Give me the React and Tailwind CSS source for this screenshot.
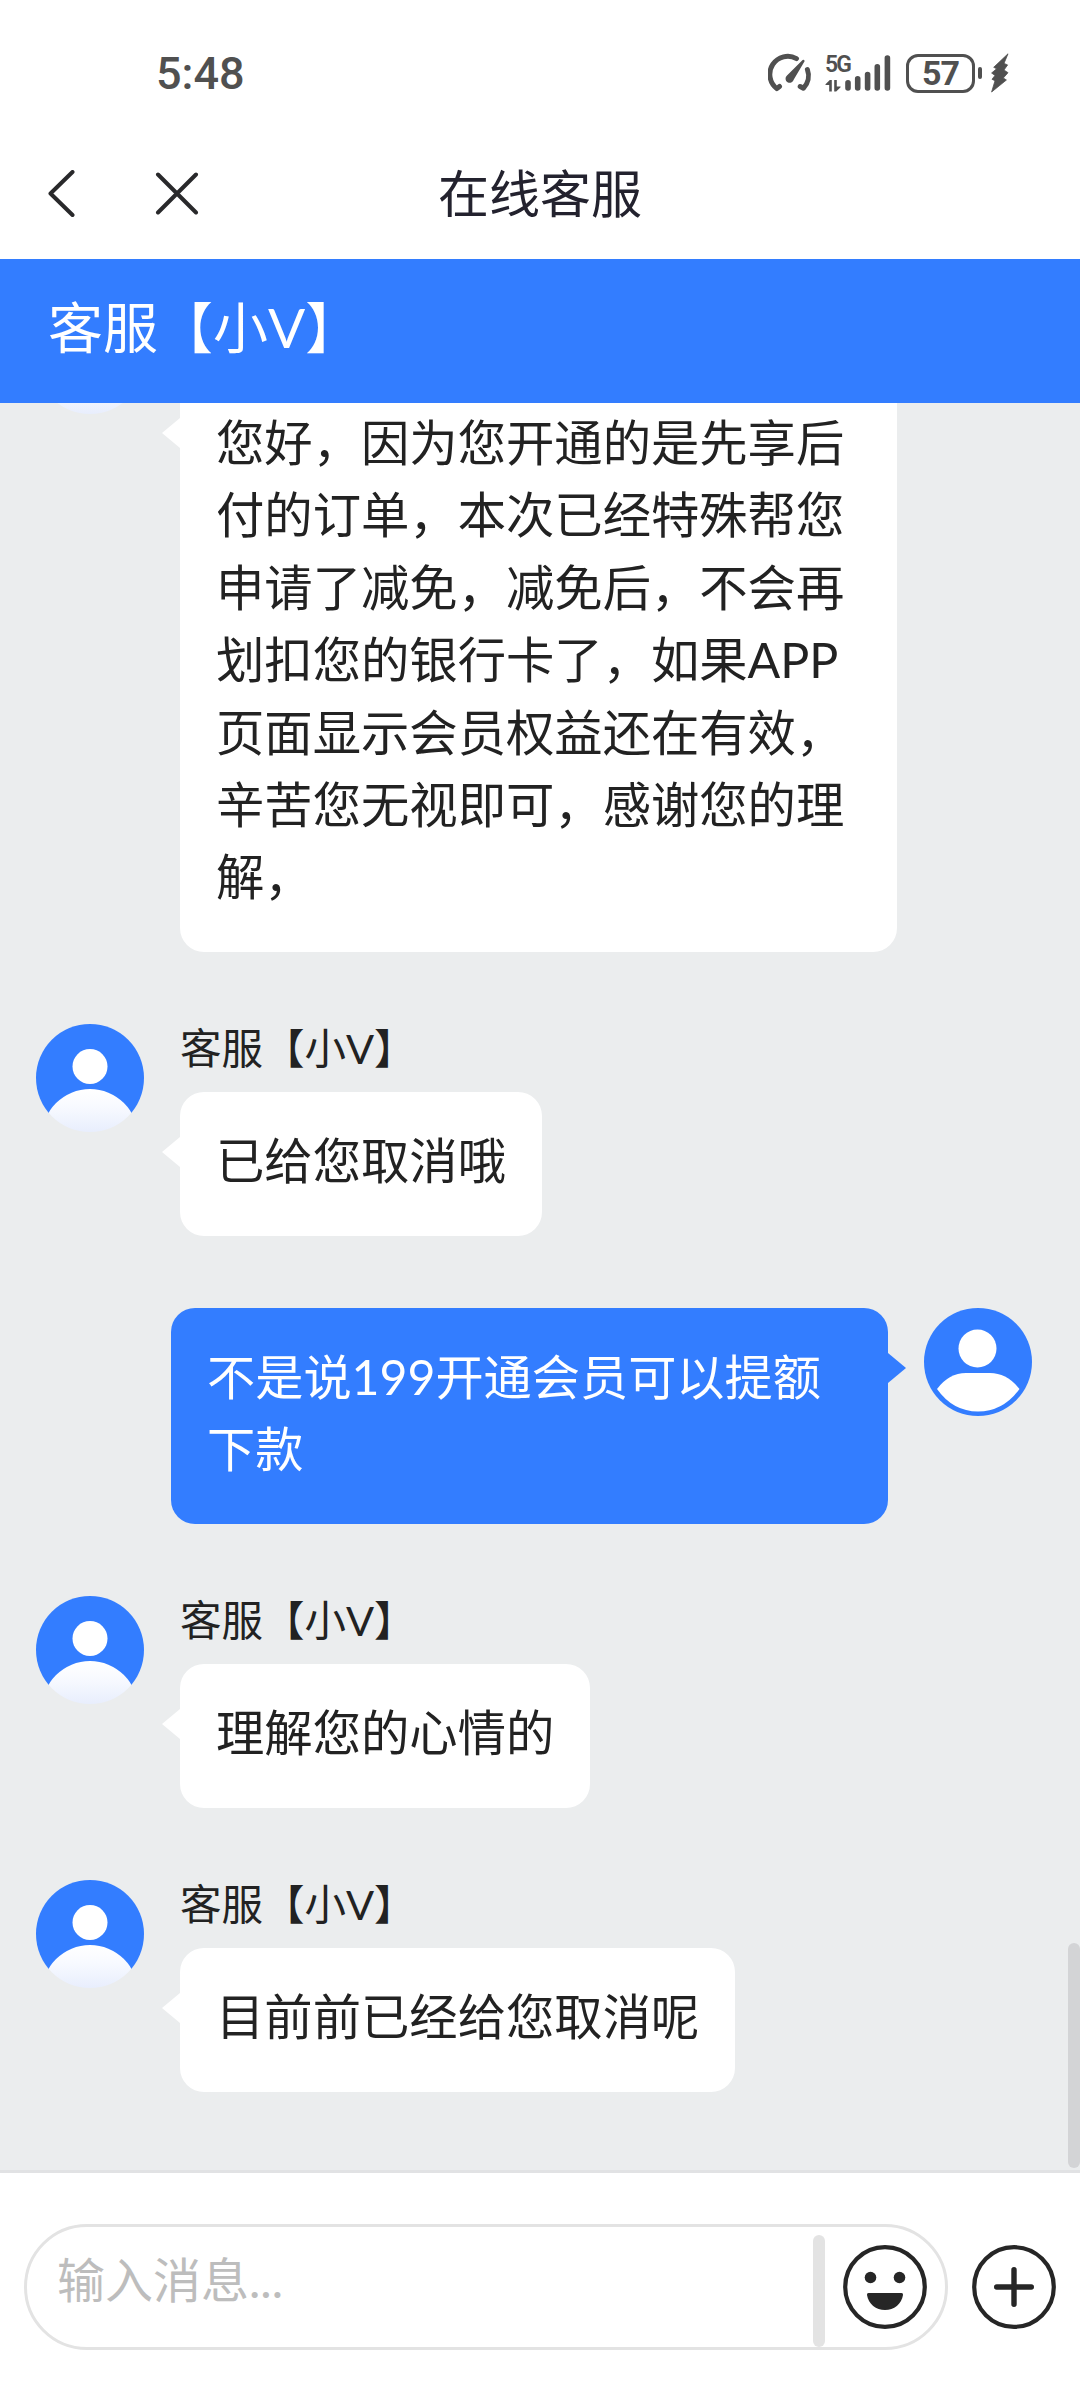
import React from "react";

const messages = [
  {
    from: "agent",
    text: "您好，因为您开通的是先享后付的订单，本次已经特殊帮您申请了减免，减免后，不会再划扣您的银行卡了，如果APP页面显示会员权益还在有效，辛苦您无视即可，感谢您的理解，",
  },
  { from: "agent", name: "客服【小V】", text: "已给您取消哦" },
  { from: "user", text: "不是说199开通会员可以提额下款" },
  { from: "agent", name: "客服【小V】", text: "理解您的心情的" },
  { from: "agent", name: "客服【小V】", text: "目前前已经给您取消呢" },
];

const StatusBar = () => (
  <div className="h-[128px] shrink-0 flex items-start pt-[52px] pl-[156px] pr-[71px] text-[#505050]">
    <span className="font-['Roboto'] font-medium text-[45px] leading-[44px] mr-auto">
      5:48
    </span>

    {/* Speed gauge */}
    <svg className="w-[45px] h-[42px]" viewBox="768 52 45 42" fill="none">
      <g stroke="currentColor" strokeWidth="5" strokeLinecap="round" strokeLinejoin="round">
        <path d="M779.5 86.5L776.8 88.6A18 18 0 0 1 796.5 58.6" />
        <path d="M807.4 69.5A18 18 0 0 1 803.4 88.2L800.2 86.5" />
      </g>
      <path d="M804.6 61.2L793.8 79.6A4.2 4.2 0 1 1 787 75.4L802.6 60Q804.6 59 804.6 61.2Z" fill="currentColor" />
    </svg>

    {/* Network */}
    <div className="flex ml-3">
      <div className="w-[19px] h-[42px] flex flex-col">
        <span className="font-['Roboto'] font-semibold text-[23px] leading-[26px] whitespace-nowrap tracking-[-2px]">
          5G
        </span>
        <svg className="w-[16px] h-[12px] mt-[2px]" viewBox="0 0 16 12" fill="currentColor">
          <path d="M6.8 0V11.5H4.2V5H0.5V4.2L4.8 0Z" />
          <path d="M9.2 11.5V0H11.8V6.5H15.6V7.3L11.2 11.5Z" />
        </svg>
      </div>
      <svg className="w-[48px] h-[42px]" viewBox="844 52 48 42" stroke="currentColor" strokeWidth="5.6" strokeLinecap="round">
        <path d="M848 82.7V88M857.7 78.7V88M867.6 74.5V88M877.3 66.7V88M887.4 58V88" />
      </svg>
    </div>

    {/* Battery */}
    <div className="flex items-center ml-[14px] mt-px">
      <div className="w-[69px] h-[39px] rounded-[12px] border-[3px] border-[#505050] flex items-center justify-center">
        <span className="font-['Roboto'] font-bold text-[34px] leading-none tracking-[-1px]">57</span>
      </div>
      <div className="w-[4px] h-[12px] ml-[3px] rounded-full bg-[#505050]" />
      <svg className="w-[18px] h-[40px] ml-[9px]" viewBox="0 0 18 40" fill="currentColor" stroke="currentColor" strokeWidth="0.8" strokeLinejoin="round">
        <path d="M17 0.8L2.7 14.3L5.6 15.8L0.6 20L4 22.4L1 26.3L4 27.7L0.6 39L15.4 27L12.3 25L17 19.7L13 17L16.6 11.9L13 10.4Z" />
      </svg>
    </div>
  </div>
);

const NavBar = () => (
  <div className="h-[131px] shrink-0 grid grid-cols-[1fr_auto_1fr] items-center">
    <div className="flex items-center text-[#29292b]">
      <svg className="w-[28px] h-[48px] ml-[48px]" viewBox="0 0 28 48" fill="none" stroke="currentColor" strokeWidth="4" strokeLinecap="round" strokeLinejoin="round">
        <path d="M24.5 2L2.5 23.5L24.5 45" />
      </svg>
      <svg className="w-[44px] h-[44px] ml-[79px]" viewBox="0 0 44 44" fill="none" stroke="currentColor" strokeWidth="4" strokeLinecap="round">
        <path d="M3 2.5L41 40.5M41 2.5L3 40.5" />
      </svg>
    </div>
    <h1 className="text-[51px] leading-[72px] text-[#23222e]">在线客服</h1>
  </div>
);

const AgentAvatar = () => (
  <svg className="w-[108px] h-[108px] shrink-0" viewBox="0 0 108 108">
    <defs>
      <clipPath id="agentClip">
        <circle cx="54" cy="54" r="54" />
      </clipPath>
      <linearGradient id="agentBody" gradientUnits="userSpaceOnUse" x1="0" y1="65" x2="0" y2="108">
        <stop offset="0" stopColor="#ffffff" />
        <stop offset="0.4" stopColor="#f8faff" />
        <stop offset="1" stopColor="#e8eefd" />
      </linearGradient>
    </defs>
    <g clipPath="url(#agentClip)">
      <rect width="108" height="89" fill="#337dff" />
      <circle cx="54" cy="42.5" r="17.5" fill="#fff" />
      <circle cx="54" cy="113" r="48" fill="url(#agentBody)" />
    </g>
  </svg>
);

const UserAvatar = () => (
  <svg className="w-[108px] h-[108px] shrink-0" viewBox="0 0 108 108">
    <circle cx="54" cy="54" r="54" fill="#337dff" />
    <circle cx="53.5" cy="40.5" r="19" fill="#fff" />
    <path d="M13 81Q25 65 42 65H66Q83 65 95.5 81Q79 103.5 54 103.5Q29 103.5 13 81Z" fill="#fff" />
  </svg>
);

const AgentMessage = ({ name, text }) => (
  <div className="flex items-start shrink-0 pl-9">
    <AgentAvatar />
    <div className="ml-9 flex flex-col items-start">
      <div className="h-[67.5px] text-[41.5px] leading-[49px] text-[#222]">{name}</div>
      <div className="relative max-w-[717px] rounded-[24px] bg-white px-9 pt-[32.5px] pb-[39.5px] text-[48.33px] leading-[72.4px] text-[#222]">
        <svg className="absolute -left-[18px] top-[45px] w-[19px] h-[30px]" viewBox="0 0 19 30" fill="#fff">
          <path d="M0 15L18 0H19V30H18Z" />
        </svg>
        {text}
      </div>
    </div>
  </div>
);

const UserMessage = ({ text }) => (
  <div className="flex items-start justify-end shrink-0 pr-12">
    <div className="relative w-[717px] mr-9 rounded-[24px] bg-[#337dff] px-9 pt-8 pb-10 text-[48.2px] leading-[72px] text-white">
      <svg className="absolute -right-[18px] top-[45px] w-[19px] h-[30px]" viewBox="0 0 19 30" fill="#337dff">
        <path d="M19 15L1 0H0V30H1Z" />
      </svg>
      {text}
    </div>
    <UserAvatar />
  </div>
);

const InputBar = () => (
  <div className="h-[230px] shrink-0 bg-white border-t-[3px] border-[#e1e2e4] flex items-start pt-[51px] pl-6">
    <div className="w-[924px] h-[126px] rounded-full border-[3px] border-[#e3e3e3] flex items-start">
      <span className="flex-1 pl-[30px] pt-[17px] text-[48px] leading-[72px] text-[#bdbdbd]">
        输入消息...
      </span>
      <div className="w-[12px] h-[112px] mt-2 rounded-full bg-[#e3e3e3]" />
      <svg className="w-[84px] h-[84px] mt-[18px] ml-[18px] mr-[18px]" viewBox="0 0 84 84" fill="#262626">
        <circle cx="42" cy="42" r="39.8" fill="none" stroke="#262626" strokeWidth="4.2" />
        <circle cx="27.5" cy="32.5" r="5.8" />
        <circle cx="56.5" cy="32.5" r="5.8" />
        <path d="M25.5 48H58.5Q60.3 48 60 50C58.5 59 51 65 42 65S25.5 59 24 50Q23.7 48 25.5 48Z" />
      </svg>
    </div>
    <svg className="w-[84px] h-[84px] mt-[21px] ml-6" viewBox="0 0 84 84" fill="none" stroke="#262626">
      <circle cx="42" cy="42" r="39.8" strokeWidth="4.2" />
      <path d="M24.7 42H59.3M42 24.7V59.3" strokeWidth="5.4" strokeLinecap="round" />
    </svg>
  </div>
);

const App = () => {
  return (
    <div className="w-[1080px] h-[2400px] bg-white flex flex-col overflow-hidden font-['Lato','Noto_Sans_CJK_SC',sans-serif]">
      <StatusBar />
      <NavBar />

      <div className="h-[144px] shrink-0 bg-[#337dff] pl-12 pt-[28px] text-[55px] leading-[80px] text-white">
        客服【小V】
      </div>

      {/* Conversation, pinned to the latest message */}
      <div className="relative flex-1 min-h-0 overflow-hidden bg-[#ebedee] flex flex-col justify-end gap-[72px] pb-[78px]">
        {messages.map((message, index) =>
          message.from === "agent" ? (
            <AgentMessage key={index} name={message.name} text={message.text} />
          ) : (
            <UserMessage key={index} text={message.text} />
          )
        )}
        <div className="absolute right-0 bottom-[2px] w-[12px] h-[225px] rounded-full bg-[#d3d4d6]" />
      </div>

      <InputBar />
    </div>
  );
};

export default App;
